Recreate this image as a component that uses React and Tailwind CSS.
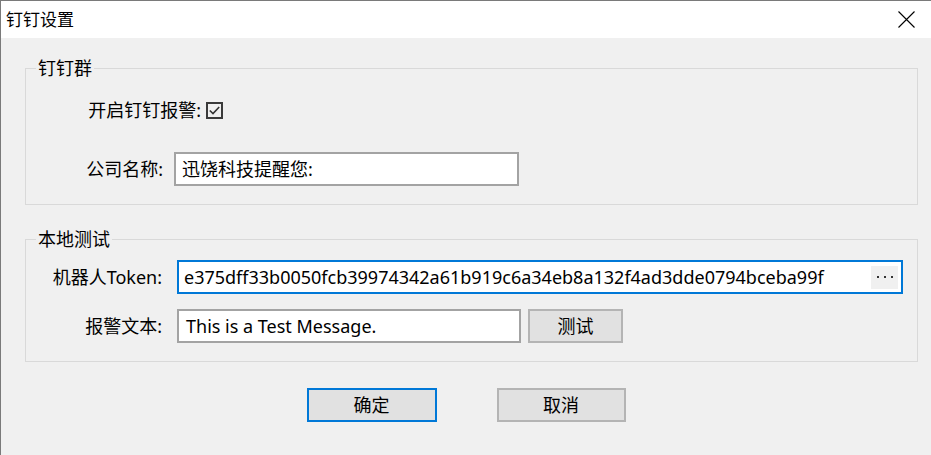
import React from "react";

const FONT = { fontFamily: '"Noto Sans", "Noto Sans CJK SC", sans-serif' };

function Checkbox() {
  return (
    <span className="flex h-[17px] w-[17px] items-center justify-center border-2 border-[#3a3a3a] bg-transparent">
      <svg width="13" height="13" viewBox="0 0 13 13" fill="none">
        <path d="M1.8 6.5 L5 9.6 L11.2 3" stroke="#333333" strokeWidth="1.6" />
      </svg>
    </span>
  );
}

function Legend({ children }) {
  return (
    <legend className="ml-[10px] px-[2px] text-[18px] leading-[24px] text-black">{children}</legend>
  );
}

export default function App() {
  return (
    <div
      className="flex h-[455px] w-[931px] flex-col overflow-hidden border-l border-t border-[#7a7a7a] bg-[#f0f0f0] text-[18px] text-black"
      style={FONT}
    >
      {/* title bar */}
      <div className="flex h-[37px] shrink-0 items-center justify-between bg-white pl-[5px] pr-[16px]">
        <span className="text-[17px] leading-[24px]">钉钉设置</span>
        <svg width="17" height="17" viewBox="0 0 17 17" fill="none">
          <path d="M0.5 0.5 L16.5 16.5 M16.5 0.5 L0.5 16.5" stroke="#000" strokeWidth="1.1" />
        </svg>
      </div>

      {/* body */}
      <div className="flex flex-1 flex-col pl-[24px] pr-[13px]">
        <fieldset className="mt-[18px] border border-[#d9d9d9] px-0 pb-[18px] pt-[18px]">
          <Legend>钉钉群</Legend>
          <div className="flex h-[24px] items-center">
            <span className="w-[175px] text-right leading-[24px]">开启钉钉报警:</span>
            <span className="ml-[5px]">
              <Checkbox />
            </span>
          </div>
          <div className="mt-[30px] flex items-center">
            <span className="w-[137px] text-right leading-[24px]">公司名称:</span>
            <div className="ml-[11px] flex h-[34px] w-[345px] items-center border-2 border-[#a3a3a3] bg-white pl-[6px] leading-[24px]">
              迅饶科技提醒您:
            </div>
          </div>
        </fieldset>

        <fieldset className="mt-[22px] border border-[#d9d9d9] px-0 pb-[18px] pt-[9px]">
          <Legend>本地测试</Legend>
          <div className="flex items-center">
            <span className="w-[136px] text-right leading-[24px]">机器人Token:</span>
            <div className="ml-[15px] flex h-[34px] w-[726px] items-center border-2 border-[#0078d7] bg-white pl-[5px] pr-[3px]">
              <span className="flex-1 leading-[24px]">e375dff33b0050fcb39974342a61b919c6a34eb8a132f4ad3dde0794bceba99f</span>
              <span className="flex h-[23px] w-[27px] items-center justify-center gap-[5px] bg-[#f0f0f0]">
                <span className="h-[2px] w-[2px] bg-[#333333]" />
                <span className="h-[2px] w-[2px] bg-[#333333]" />
                <span className="h-[2px] w-[2px] bg-[#333333]" />
              </span>
            </div>
          </div>
          <div className="mt-[15px] flex items-center">
            <span className="w-[136px] text-right leading-[24px]">报警文本:</span>
            <div className="ml-[15px] flex h-[34px] w-[344px] items-center border-2 border-[#a3a3a3] bg-white pl-[7px] leading-[24px]">
              This is a Test Message.
            </div>
            <button className="ml-[7px] flex h-[34px] w-[95px] items-center justify-center border-2 border-[#b4b4b4] bg-[#e1e1e1] leading-[24px]">
              测试
            </button>
          </div>
        </fieldset>

        <div className="mt-[26px] flex justify-center gap-[60px] pr-[11px]">
          <button className="flex h-[34px] w-[130px] items-center justify-center border-2 border-[#0078d7] bg-[#e1e1e1] leading-[24px]">
            确定
          </button>
          <button className="flex h-[34px] w-[129px] items-center justify-center border-2 border-[#b4b4b4] bg-[#e1e1e1] leading-[24px]">
            取消
          </button>
        </div>
      </div>
    </div>
  );
}
